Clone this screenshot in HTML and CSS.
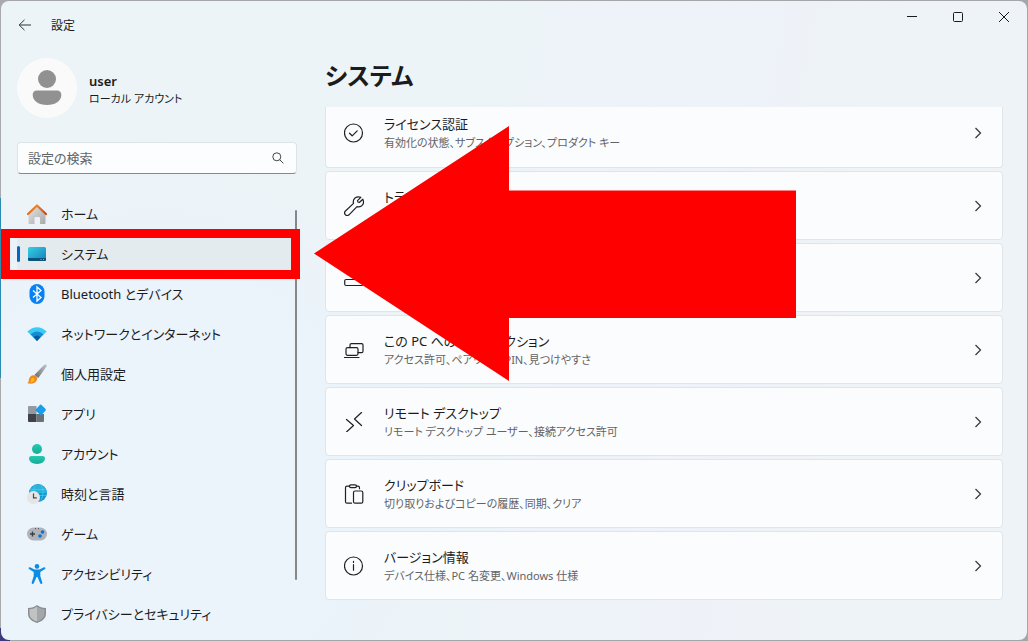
FILE: index.html
```html
<!DOCTYPE html>
<html lang="ja">
<head>
<meta charset="utf-8">
<meta name="viewport" content="width=device-width, initial-scale=1">
<title>設定</title>
<link rel="stylesheet" href="styles.css">
</head>
<body>
<div class="window">
  <header class="titlebar">
    <button class="back" aria-label="戻る"><svg width="14" height="12" viewBox="0 0 14 12"><path d="M6.5 .8 1.2 6l5.3 5.2M1.2 6H13"/></svg></button>
    <span class="app-name">設定</span>
    <div class="controls">
      <button aria-label="最小化"><svg width="12" height="12" viewBox="0 0 12 12"><path d="M1 5.5h10"/></svg></button>
      <button aria-label="最大化"><svg width="12" height="12" viewBox="0 0 12 12"><rect x="1.5" y="1.5" width="9" height="9" rx="1"/></svg></button>
      <button aria-label="閉じる"><svg width="12" height="12" viewBox="0 0 12 12"><path d="m1 1 10 10M11 1 1 11"/></svg></button>
    </div>
  </header>
  <div class="layout">
    <aside class="sidebar">
      <div class="profile">
        <svg class="avatar" width="60" height="60" viewBox="0 0 60 60"><circle cx="30" cy="30" r="30" fill="#fafafa"/><circle cx="30" cy="21" r="9" fill="#919191"/><path d="M20 32.5h20q4.300 0 4.300 4.500c0 6-6 10-14.300 10s-14.300-4-14.300-10q0-4.500 4.300-4.500z" fill="#919191"/></svg>
        <div class="who"><strong>user</strong><span>ローカル アカウント</span></div>
      </div>
      <label class="search">
        <input type="text" placeholder="設定の検索" aria-label="設定の検索">
        <svg width="12" height="12" viewBox="0 0 12 12"><circle cx="4.800" cy="4.800" r="4"/><path d="m7.700 7.700 3.700 3.700"/></svg>
      </label>
      <nav class="nav">
        <a href="#"><svg viewBox="0 0 20 20"><defs><linearGradient id="wall" x2="1" y2="1"><stop stop-color="#e4e4e4"/><stop offset="1" stop-color="#aaa"/></linearGradient><linearGradient id="roof" x2="1" y2="1"><stop stop-color="#f59a2b"/><stop offset="1" stop-color="#d3431c"/></linearGradient></defs><path d="M1.500 9 10 1.500 18.500 9v10q0 1-1 1H13v-6q0-1-1-1H8.500q-1 0-1 1v6h-5q-1 0-1-1z" fill="url(#wall)"/><path d="m1 10 9-8.500 9 8.500" fill="none" stroke="url(#roof)" stroke-width="2.300" stroke-linecap="round" stroke-linejoin="round"/></svg>ホーム</a>
        <a href="#" class="current" aria-current="page"><svg viewBox="0 0 20 20"><defs><linearGradient id="screen" x2="1" y2="1"><stop stop-color="#35d0e6"/><stop offset="1" stop-color="#157fb7"/></linearGradient></defs><rect x="1" y="3" width="18" height="14" rx="1.500" fill="url(#screen)"/><path d="M1 14h18v1.500q0 1.500-1.500 1.500h-15Q1 17 1 15.500z" fill="#0b527e"/><path d="M13.500 15.500h1m1.500 0h1" stroke="#50c8ed"/></svg>システム</a>
        <a href="#"><svg viewBox="0 0 20 20"><rect x="2.500" width="15" height="20" rx="7.500" fill="#0782f5"/><path d="m6 6.500 8 7-4 3.500V3l4 3.500-8 7" fill="none" stroke="#fff" stroke-width="1.300"/></svg>Bluetooth とデバイス</a>
        <a href="#"><svg viewBox="0 0 20 20"><path d="M.3 7.600Q10-1.200 19.700 7.600L10 17z" fill="#3bcaf4"/><path d="M3.500 10.300q6.500-5.600 13 0L10 17z" fill="#168bd2"/><path d="M6.600 13q3.400-3 6.800 0L10 17z" fill="#0b59a5"/></svg>ネットワークとインターネット</a>
        <a href="#"><svg viewBox="0 0 20 20"><defs><linearGradient id="handle" x1="1" x2="0" y2="1"><stop stop-color="#c4c7ca"/><stop offset="1" stop-color="#64696e"/></linearGradient></defs><path d="M19 .4c1 .2 1 1 .5 2L11.300 14 7.400 11 16.500 1.600Q17.700.2 19 .4z" fill="url(#handle)"/><path d="M6.300 11.300c2.400-.3 4.500 2 3.700 4.200-1.200 4.200-6 4.800-10 3.600 2.400-1.200 1.500-2.600 2.200-4.600.7-1.900 2-3 4.100-3.200z" fill="#f28a18"/><path d="M5 14c1.500-.5 3 1 2 2.400-1 1.400-2.400 2-4 2.200 1.500-1.400.7-3.600 2-4.600z" fill="#ffb72c"/></svg>個人用設定</a>
        <a href="#"><svg viewBox="0 0 20 20"><path d="M2 2h7.500v8H1V3q0-1 1-1z" fill="#959aa1"/><path d="M1 10h8.500v8H2q-1 0-1-1z" fill="#3f4246"/><path d="M9.500 10H17v7q0 1-1 1H9.500z" fill="#6c7077"/><path d="m8.700 5.500 4.400-4.700q.6-.6 1.200 0l4.300 4.300q.6.700 0 1.300l-4 4.500q-.7.600-1.300 0L8.700 6.800q-.6-.6 0-1.300z" fill="#1b9de9"/></svg>アプリ</a>
        <a href="#"><svg viewBox="0 0 20 20"><defs><linearGradient id="person" y2="1" x2="0"><stop stop-color="#25cbb0"/><stop offset="1" stop-color="#16aa95"/></linearGradient></defs><circle cx="10" cy="5" r="5" fill="url(#person)"/><path d="M4.500 12h11q2.500 0 2.500 2.300c0 3.500-3.500 5.700-8 5.700s-8-2.200-8-5.700Q2 12 4.500 12z" fill="url(#person)"/></svg>アカウント</a>
        <a href="#"><svg viewBox="0 0 20 20"><circle cx="11" cy="9" r="9" fill="#1697cf"/><path d="M3 5.500q8-9 15.500-1L20 9H2z" fill="#28b3dc"/><path d="M3.500 5.500h15M2 11.500h17.500M8 .5q-3 8 1 16M14 .5q4 8 0 16" fill="none" stroke="#55c9e8" stroke-width=".7"/><circle cx="6.500" cy="13.500" r="6.500" fill="#e3e5e6"/><path d="M6.500 9.500v4.300h3.300" fill="none" stroke="#45484b" stroke-width="1.200"/></svg>時刻と言語</a>
        <a href="#"><svg viewBox="0 0 20 20"><rect y="3.500" width="20" height="13" rx="6.500" fill="#b0b4b9"/><path d="M5.500 7.500v5M3 10h5" stroke="#3b3e42" stroke-width="1.300"/><circle cx="15.500" cy="8" r="1.800" fill="#0873d0"/><circle cx="13" cy="12" r="1.800" fill="#0873d0"/><path d="M8 4.700h1m2 0h1" stroke="#45484b"/></svg>ゲーム</a>
        <a href="#"><svg viewBox="0 0 20 20"><circle cx="10" cy="2.400" r="2.300" fill="#0c8de5"/><path d="M3 3.300 7.500 5.500h5L17 3.300q1.200-.2 1.400.8.100.8-.8 1.200L13.300 8v4l2 6.500q.2 1-.7 1.400-1 .2-1.400-.6L10.500 13h-1l-2.700 6.300q-.5.800-1.400.6-.9-.4-.7-1.400l2-6.500V8L2.400 5.300q-.9-.4-.8-1.200.2-1 1.400-.8z" fill="#0c8de5"/></svg>アクセシビリティ</a>
        <a href="#"><svg viewBox="0 0 20 20"><path d="M10 1q3.500 3 9 3v5.500C19 14.500 15 17.500 10 19 5 17.500 1 14.500 1 9.500V4q5.500 0 9-3z" fill="#898c90"/><path d="M10 2.500q-3 2.500-7.500 2.800v4.200c0 4 3 6.500 7.500 8z" fill="#c0c2c4"/><path d="M10 2.500q3 2.500 7.500 2.800v4.200c0 4-3 6.500-7.500 8z" fill="#a4a7aa"/></svg>プライバシーとセキュリティ</a>
      </nav>
    </aside>
    <main class="content">
      <h1>システム</h1>
      <div class="cards">
        <button class="card clipped"><svg class="icon" viewBox="0 0 20 20"><circle cx="9.500" cy="10" r="9"/><path d="m5.500 10.200 2.700 2.600 5-5"/></svg><span class="text"><b>ライセンス認証</b><small>有効化の状態、サブスクリプション、プロダクト キー</small></span><svg class="chevron" viewBox="0 0 8 12"><path d="m1.500 1 5 5-5 5"/></svg></button>
        <button class="card"><svg class="icon" viewBox="0 0 20 20"><path d="M16.800 1.300 13.500 4.700q.1 1.700 1.800 1.800L18.800 3.200q2 4.400-1.300 6.800-2.300 1.300-4.500.6L5 18.800Q3.300 20.200 1.500 18.900-.2 17 1.200 15.200L9.500 7.400Q8.600 4.200 11 2q2.700-2 5.800-.7z"/></svg><span class="text"><b>トラブルシューティング</b></span><svg class="chevron" viewBox="0 0 8 12"><path d="m1.500 1 5 5-5 5"/></svg></button>
        <button class="card" aria-label="回復"><svg class="icon" viewBox="0 0 20 20"><rect x=".7" y="11.500" width="18.600" height="6" rx="1.500"/></svg><span class="text"></span><svg class="chevron" viewBox="0 0 8 12"><path d="m1.500 1 5 5-5 5"/></svg></button>
        <button class="card"><svg class="icon" viewBox="0 0 20 20"><rect x="2" y="7.700" width="12" height="7.600" rx="1.500"/><path d="M6 7.700V5q0-1.400 1.400-1.400h10.200Q19 3.600 19 5v6.200q0 1.500-1.400 1.500H14M.5 17.500H15"/></svg><span class="text"><b>この PC へのプロジェクション</b><small>アクセス許可、ペアリング PIN、見つけやすさ</small></span><svg class="chevron" viewBox="0 0 8 12"><path d="m1.500 1 5 5-5 5"/></svg></button>
        <button class="card"><svg class="icon" viewBox="0 0 20 20"><path d="m2.500 7.500 7 6-7 6.500M17.500.5l-7 6.500 7 6.500"/></svg><span class="text"><b>リモート デスクトップ</b><small>リモート デスクトップ ユーザー、接続アクセス許可</small></span><svg class="chevron" viewBox="0 0 8 12"><path d="m1.500 1 5 5-5 5"/></svg></button>
        <button class="card"><svg class="icon" viewBox="0 0 20 20"><path d="M5.500 2.200H3q-1.500 0-1.500 1.500v14q0 1.500 1.500 1.500h4.500M12.500 2.200H14q1.500 0 1.500 1.500v1"/><rect x="5.500" y=".8" width="7" height="2.800" rx="1.400"/><rect x="9.500" y="7" width="9.300" height="12.200" rx="1.500"/></svg><span class="text"><b>クリップボード</b><small>切り取りおよびコピーの履歴、同期、クリア</small></span><svg class="chevron" viewBox="0 0 8 12"><path d="m1.500 1 5 5-5 5"/></svg></button>
        <button class="card"><svg class="icon" viewBox="0 0 20 20"><circle cx="9.500" cy="10" r="9"/><path d="M9.500 8.700v5.500M9.500 5.400v1"/></svg><span class="text"><b>バージョン情報</b><small>デバイス仕様、PC 名変更、Windows 仕様</small></span><svg class="chevron" viewBox="0 0 8 12"><path d="m1.500 1 5 5-5 5"/></svg></button>
      </div>
    </main>
  </div>
  <svg class="arrow" width="482" height="255" viewBox="0 0 482 255" aria-hidden="true"><path d="M0 127.500 195 0v64.500h287v127.500H195V255z" fill="red"/></svg>
</div>
</body>
</html>
```
FILE: styles.css
```css
* { box-sizing: border-box; }
body {
  margin: 0;
  padding: 1px;
  min-height: 100vh;
  display: flex;
  background: linear-gradient(#a9aaad 0 198px, #2b8bb0 198px 378px, #a9a9ab 378px 628px, #3c397c 628px) left / 10px 100% no-repeat, #a5a6a9;
  font-family: "Noto Sans", "Noto Sans CJK JP", sans-serif;
  font-feature-settings: "palt";
  font-size: 13px;
  line-height: 20px;
  color: #1b1b1b;
}
button, input { font: inherit; font-feature-settings: inherit; color: inherit; }
button { border: 0; background: none; padding: 0; }
svg { fill: none; stroke-width: 1; flex: none; }
.window {
  position: relative;
  flex: 1;
  border-radius: 8px;
  overflow: hidden;
  background:
    radial-gradient(circle at 15% 75%, #ebf3fb 0 200px, transparent 360px),
    linear-gradient(100deg, #ecf4f7 40%, #eef2f9 65%, #eef3f7 80%);
}
.titlebar { display: flex; height: 48px; align-items: center; font-size: 12px; }
.app-name { padding-top: 2px; }
.back { width: 34px; height: 32px; margin-left: 7px; margin-right: 9px; display: grid; place-items: center; stroke: #333; }
.controls { margin-left: auto; align-self: flex-start; display: flex; stroke: #1b1b1b; }
.controls button { width: 46px; height: 32px; display: grid; place-items: center; }
.layout { display: flex; }
.sidebar { width: 296px; padding: 9px 0 0 16px; flex: none; }
.profile { display: flex; align-items: center; gap: 12px; }
.who { display: flex; flex-direction: column; font-size: 11px; line-height: 17px; padding-top: 4px; }
.who strong { font-size: 13px; font-weight: 600; }
.search {
  display: flex;
  align-items: center;
  height: 32px;
  margin: 24px 0 22px;
  padding: 0 12px 0 10px;
  border: 1px solid #dde4e8;
  border-bottom-color: #868a8d;
  border-radius: 4px;
  background: #fbfdfe;
  stroke: #444;
}
.search input { flex: 1; min-width: 0; border: 0; padding: 0; background: none; outline: 0; }
.search input::placeholder { color: #626466; opacity: 1; }
.nav { position: relative; display: flex; flex-direction: column; gap: 4px; }
.nav::after {
  content: "";
  position: absolute;
  top: 14px;
  right: 0;
  bottom: 52px;
  width: 2px;
  border-radius: 1px;
  background: #858789;
}
.nav a {
  position: relative;
  display: flex;
  align-items: center;
  gap: 14px;
  height: 36px;
  padding-left: 10px;
  border-radius: 4px;
  color: inherit;
  text-decoration: none;
  white-space: nowrap;
}
.nav svg { width: 20px; height: 20px; }
.nav .current { background: #e4ebee; z-index: 1; }
.current::before {
  content: "";
  position: absolute;
  left: 0;
  width: 3px;
  height: 16px;
  border-radius: 2px;
  background: #0766c1;
}
.current::after {
  content: "";
  position: absolute;
  inset: -7px -3px -7px -16px;
  border: 9px solid red;
}
.content { flex: 1; min-width: 0; padding: 9px 24px 40px 28px; }
h1 { margin: 0 0 13px; font-size: 24px; line-height: 36px; font-weight: 600; }
.cards { display: flex; flex-direction: column; gap: 3px; }
.card {
  display: flex;
  align-items: center;
  height: 69px;
  padding: 0 20px 0 18px;
  border: 1px solid #dfe5e9;
  border-radius: 4px;
  background: #fbfcfe;
  text-align: left;
}
.clipped { height: 61px; padding-bottom: 8px; border-top: 0; border-radius: 0 0 4px 4px; }
.icon { width: 20px; height: 20px; margin-right: 20px; stroke: #202020; stroke-width: 1.2; stroke-linejoin: round; stroke-linecap: round; }
.text { flex: 1; min-height: 36px; display: flex; flex-direction: column; white-space: nowrap; }
.text b { font-weight: 400; line-height: 19px; }
.text small { font-size: 11px; line-height: 17px; color: #626365; }
.chevron { width: 8px; height: 12px; stroke: #3c3c3c; stroke-width: 1.3; }
.arrow { position: absolute; left: 313px; top: 125px; }
```
